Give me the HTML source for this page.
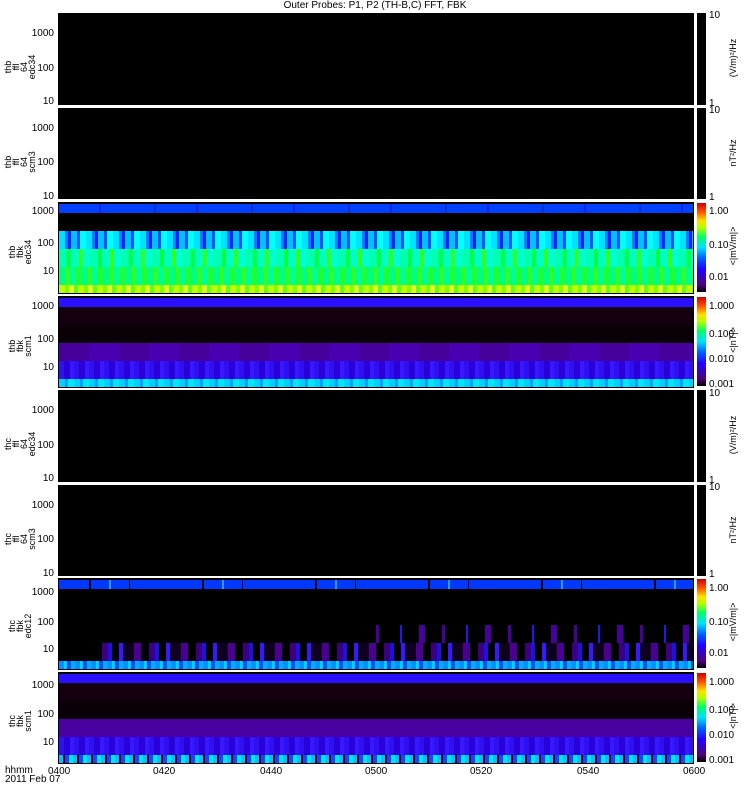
<!DOCTYPE html>
<html><head><meta charset="utf-8"><style>
body{margin:0;width:750px;height:800px;background:#fff;position:relative;overflow:hidden;font-family:"Liberation Sans",sans-serif;font-size:10px;color:#000}
.a{position:absolute}
.p{position:absolute;left:58px;width:636px;background:#000;overflow:hidden}
.b{position:absolute;left:0;width:100%}
.cb{position:absolute;left:697px;width:9px}
.rb{background:linear-gradient(to top,#000 0%,#50007a 8%,#2000ff 25%,#0060ff 38%,#00e0ff 50%,#00ff60 62%,#b0ff00 72%,#ffe000 80%,#ff5000 90%,#d00000 100%)}
.yl{position:absolute;font-size:10px;text-align:right;width:30px;left:24px}
.lab{position:absolute;font-size:9px;line-height:8px;transform:rotate(-90deg);transform-origin:center;text-align:center;width:60px;left:-10px}
.cl{position:absolute;left:709px;font-size:10px}
.vt{position:absolute;transform:rotate(-90deg);transform-origin:center;font-size:9px;left:688px;width:90px;text-align:center;white-space:nowrap}
.t{position:absolute;top:766px;font-size:10px}
</style></head><body>
<div class="a" style="left:0;width:750px;top:0;text-align:center;font-size:10px">Outer Probes: P1, P2 (TH-B,C) FFT, FBK</div>

<div class="p" style="top:13px;height:92px"></div>
<div class="cb" style="top:13px;height:92px;background:#000"></div>
<div class="yl" style="top:28px">1000</div><div class="yl" style="top:63px">100</div><div class="yl" style="top:96px">10</div>
<div class="lab" style="top:51px">thb<br>ffl<br>64<br>edc34</div>
<div class="cl" style="top:10px">10</div><div class="cl" style="top:98px">1</div>
<div class="vt" style="top:53px">(V/m)²/Hz</div>

<div class="p" style="top:108px;height:91px"></div>
<div class="cb" style="top:108px;height:91px;background:#000"></div>
<div class="yl" style="top:123px">1000</div><div class="yl" style="top:157px">100</div><div class="yl" style="top:191px">10</div>
<div class="lab" style="top:146px">thb<br>ffl<br>64<br>scm3</div>
<div class="cl" style="top:105px">10</div><div class="cl" style="top:192px">1</div>
<div class="vt" style="top:148px">nT²/Hz</div>

<div class="p" style="top:202px;height:92px;border:1px solid #000;box-sizing:border-box">
<div class="b" style="top:1px;height:9px;background:repeating-linear-gradient(90deg,#0040ff 0 40px,#2020e0 40px 42px,#0040ff 42px 95px,#1030c0 95px 97px)"></div>
<div class="b" style="top:28px;height:18px;background:repeating-linear-gradient(90deg,#00e0ff 0 6px,#0080ff 6px 9px,#2020ff 9px 12px,#00c0ff 12px 18px,#0050ff 18px 21px,#00ffff 21px 27px)"></div>
<div class="b" style="top:46px;height:18px;background:repeating-linear-gradient(90deg,#00ffb0 0 8px,#00ff40 8px 12px,#00ffc0 12px 20px,#30ff20 20px 24px,#00ffd0 24px 31px)"></div>
<div class="b" style="top:64px;height:18px;background:repeating-linear-gradient(90deg,#00ff80 0 7px,#40ff00 7px 10px,#00ff90 10px 17px,#20ff30 17px 22px)"></div>
<div class="b" style="top:82px;height:9px;background:repeating-linear-gradient(90deg,#c0ff00 0 6px,#80ff00 6px 10px,#e0ff20 10px 15px,#60ff20 15px 19px)"></div>
</div>
<div class="cb rb" style="top:203px;height:89px"></div>
<div class="yl" style="top:206px">1000</div><div class="yl" style="top:238px">100</div><div class="yl" style="top:266px">10</div>
<div class="lab" style="top:240px">thb<br>fbk<br>edc34</div>
<div class="cl" style="top:206px">1.00</div><div class="cl" style="top:240px">0.10</div><div class="cl" style="top:272px">0.01</div>
<div class="vt" style="top:241px">&lt;|mV/m|&gt;</div>

<div class="p" style="top:296px;height:92px;border:1px solid #000;box-sizing:border-box">
<div class="b" style="top:1px;height:9px;background:#2a10ff"></div>
<div class="b" style="top:10px;height:18px;background:#150010"></div>
<div class="b" style="top:28px;height:18px;background:#0a0008"></div>
<div class="b" style="top:46px;height:18px;background:repeating-linear-gradient(90deg,#48009a 0 30px,#4a00b0 30px 60px)"></div>
<div class="b" style="top:64px;height:18px;background:repeating-linear-gradient(90deg,#3010f0 0 5px,#2a00d8 5px 11px,#3818ff 11px 15px)"></div>
<div class="b" style="top:82px;height:9px;background:repeating-linear-gradient(90deg,#00d0ff 0 6px,#00a0ff 6px 9px,#00e8ff 9px 15px)"></div>
</div>
<div class="cb rb" style="top:297px;height:89px"></div>
<div class="yl" style="top:301px">1000</div><div class="yl" style="top:334px">100</div><div class="yl" style="top:362px">10</div>
<div class="lab" style="top:334px">thb<br>fbk<br>scm1</div>
<div class="cl" style="top:301px">1.000</div><div class="cl" style="top:329px">0.100</div><div class="cl" style="top:354px">0.010</div><div class="cl" style="top:379px">0.001</div>
<div class="vt" style="top:335px">&lt;|nT|&gt;</div>

<div class="p" style="top:390px;height:92px"></div>
<div class="cb" style="top:390px;height:92px;background:#000"></div>
<div class="yl" style="top:405px">1000</div><div class="yl" style="top:440px">100</div><div class="yl" style="top:473px">10</div>
<div class="lab" style="top:428px">thc<br>ffl<br>64<br>edc34</div>
<div class="cl" style="top:388px">10</div><div class="cl" style="top:475px">1</div>
<div class="vt" style="top:430px">(V/m)²/Hz</div>

<div class="p" style="top:485px;height:91px"></div>
<div class="cb" style="top:485px;height:91px;background:#000"></div>
<div class="yl" style="top:500px">1000</div><div class="yl" style="top:534px">100</div><div class="yl" style="top:568px">10</div>
<div class="lab" style="top:523px">thc<br>ffl<br>64<br>scm3</div>
<div class="cl" style="top:482px">10</div><div class="cl" style="top:569px">1</div>
<div class="vt" style="top:525px">nT²/Hz</div>

<div class="p" style="top:578px;height:92px;border:1px solid #000;box-sizing:border-box">
<div class="b" style="top:1px;height:9px;background:repeating-linear-gradient(90deg,#0038ff 0 30px,#000 30px 32px,#0038ff 32px 50px,#20a0ff 50px 52px,#0038ff 52px 70px,#000 70px 71px,#0038ff 71px 113px)"></div>
<div class="b" style="top:46px;height:18px;left:300px;width:336px;background:repeating-linear-gradient(90deg,#000 0 17px,#48009a 17px 20px,#000 20px 41px,#3010f0 41px 43px,#000 43px 60px,#48009a 60px 66px)"></div>
<div class="b" style="top:64px;height:18px;left:35px;width:601px;background:repeating-linear-gradient(90deg,#000 0 8px,#3a0080 8px 14px,#2010e0 14px 18px,#000 18px 25px,#3818ff 25px 29px,#100020 29px 40px,#4a0090 40px 47px)"></div>
<div class="b" style="top:82px;height:9px;background:repeating-linear-gradient(90deg,#0090ff 0 5px,#00d0ff 5px 8px,#0050ff 8px 12px,#00b0ff 12px 16px)"></div>
</div>
<div class="cb rb" style="top:579px;height:89px"></div>
<div class="yl" style="top:587px">1000</div><div class="yl" style="top:617px">100</div><div class="yl" style="top:644px">10</div>
<div class="lab" style="top:614px">thc<br>fbk<br>edc12</div>
<div class="cl" style="top:583px">1.00</div><div class="cl" style="top:617px">0.10</div><div class="cl" style="top:648px">0.01</div>
<div class="vt" style="top:617px">&lt;|mV/m|&gt;</div>

<div class="p" style="top:672px;height:92px;border:1px solid #000;box-sizing:border-box">
<div class="b" style="top:1px;height:9px;background:#2a10ff"></div>
<div class="b" style="top:10px;height:18px;background:#150010"></div>
<div class="b" style="top:28px;height:18px;background:#0a0008"></div>
<div class="b" style="top:46px;height:18px;background:#4a00a0"></div>
<div class="b" style="top:64px;height:18px;background:repeating-linear-gradient(90deg,#3010f0 0 5px,#2a00d8 5px 11px,#3818ff 11px 15px)"></div>
<div class="b" style="top:82px;height:9px;background:repeating-linear-gradient(90deg,#00c0ff 0 4px,#000 4px 6px,#2040ff 6px 10px,#00e8ff 10px 14px)"></div>
</div>
<div class="cb rb" style="top:673px;height:89px"></div>
<div class="yl" style="top:680px">1000</div><div class="yl" style="top:709px">100</div><div class="yl" style="top:737px">10</div>
<div class="lab" style="top:709px">thc<br>fbk<br>scm1</div>
<div class="cl" style="top:677px">1.000</div><div class="cl" style="top:705px">0.100</div><div class="cl" style="top:730px">0.010</div><div class="cl" style="top:755px">0.001</div>
<div class="vt" style="top:711px">&lt;|nT|&gt;</div>

<div class="a" style="left:5px;top:766px;font-size:10px;line-height:9px">hhmm<br>2011 Feb 07</div>
<div class="t" style="left:48px">0400</div>
<div class="t" style="left:153px">0420</div>
<div class="t" style="left:260px">0440</div>
<div class="t" style="left:365px">0500</div>
<div class="t" style="left:470px">0520</div>
<div class="t" style="left:577px">0540</div>
<div class="t" style="left:683px">0600</div>
</body></html>
